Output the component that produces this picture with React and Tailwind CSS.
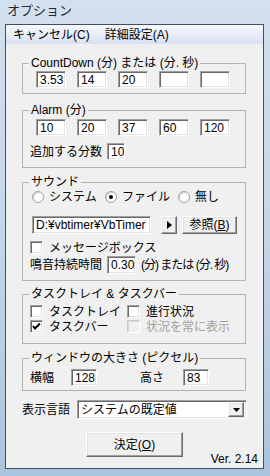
import React from "react";

const sunken =
  "bg-white border border-t-[#a0a0a0] border-l-[#a0a0a0] border-r-white border-b-white shadow-[inset_1px_1px_0_#696969,inset_-1px_-1px_0_#e3e3e3]";
const raised =
  "bg-[#f0f0f0] border border-t-white border-l-white border-r-[#696969] border-b-[#696969] shadow-[inset_-1px_-1px_0_#a0a0a0,inset_1px_1px_0_#e3e3e3]";

function TextBox({ value, className }) {
  return (
    <div className={`${sunken} pl-[3px] pt-[1px] text-[12px] leading-[14px] overflow-hidden whitespace-nowrap ${className}`}>
      {value}
    </div>
  );
}

function Group({ title, className, children }) {
  return (
    <fieldset className={`w-[224px] border border-[#b4b4b4] ${className}`}>
      <legend className="ml-[6px] px-[2px] text-[12px] leading-[12px]">{title}</legend>
      {children}
    </fieldset>
  );
}

function Check({ checked, disabled, label, className }) {
  return (
    <div className={`flex items-center h-[15px] ${className}`}>
      <div
        className={`w-[13px] h-[13px] flex items-center justify-center ${
          disabled
            ? "bg-[#f0f0f0] border border-t-[#c8c8c8] border-l-[#c8c8c8] border-r-white border-b-white shadow-[inset_1px_1px_0_#d8d8d8]"
            : sunken
        }`}
      >
        {checked && (
          <svg width="9" height="9" viewBox="0 0 9 9">
            <path d="M1 4 L3 6.5 L8 1.5" stroke="#000" strokeWidth="2" fill="none" />
          </svg>
        )}
      </div>
      <span className={`ml-[6px] text-[12px] leading-[14px] ${disabled ? "text-[#a0a0a0]" : ""}`}>{label}</span>
    </div>
  );
}

function Radio({ checked, label, className }) {
  return (
    <div className={`flex items-center h-[14px] ${className}`}>
      <div className="w-[12px] h-[12px] rounded-full bg-white border border-[#a0a0a0] shadow-[inset_1px_1px_0_#d0d0d0] flex items-center justify-center">
        {checked && <div className="w-[4px] h-[4px] rounded-full bg-black" />}
      </div>
      <span className="ml-[5px] text-[12px] leading-[14px]">{label}</span>
    </div>
  );
}

export default function App() {
  return (
    <div className="w-[270px] h-[476px] overflow-hidden bg-gradient-to-b from-[#d3e0ed] via-[#c4d6e8] to-[#aac4dd] text-black font-['Liberation_Sans','Noto_Sans_CJK_JP',sans-serif]">
      <div className="h-[24px] pl-[7px] pt-[3px] text-[13px] leading-[16px] text-[#1e2a38]">オプション</div>

      <div className="ml-[5px] w-[259px] h-[445px] border border-[#434f5c] bg-[#f0f0f0] flex flex-col">
        {/* menu bar */}
        <div className="h-[20px] flex items-center bg-gradient-to-b from-[#f7f9fd] to-[#d9e0f1] border-b border-[#eef1f8] text-[12px] leading-[14px]">
          <span className="ml-[7px]">キャンセル(C)</span>
          <span className="ml-[15px]">詳細設定(A)</span>
        </div>

        <div className="pl-[16px] flex flex-col">
          <Group title="CountDown (分) または (分. 秒)" className="mt-[12px] pt-[2px] pb-[5px]">
            <div className="flex gap-[11px] pl-[13px]">
              {["3.53", "14", "20", "", ""].map((v, i) => (
                <TextBox key={i} value={v} className="w-[30px] h-[17px]" />
              ))}
            </div>
          </Group>

          <Group title="Alarm (分)" className="mt-[10px] pt-[3px] pb-[7px]">
            <div className="flex gap-[11px] pl-[13px]">
              {["10", "20", "37", "60", "120"].map((v, i) => (
                <TextBox key={i} value={v} className="w-[30px] h-[17px]" />
              ))}
            </div>
            <div className="flex items-center mt-[7px] pl-[7px]">
              <span className="text-[12px] leading-[14px] w-[77px]">追加する分数</span>
              <TextBox value="10" className="w-[18px] h-[17px]" />
            </div>
          </Group>

          <Group title="サウンド" className="mt-[8px] pt-[2px] pb-[6px]">
            <div className="flex pl-[9px]">
              <Radio label="システム" className="w-[73px]" />
              <Radio checked label="ファイル" className="w-[73px]" />
              <Radio label="無し" />
            </div>
            <div className="flex items-center mt-[12px] pl-[9px]">
              <div className={`${sunken} w-[119px] h-[18px] overflow-hidden`}>
                <div className="w-[113px] overflow-hidden whitespace-nowrap pl-[3px] pt-[1px] text-[12px] leading-[14px]">
                  D:¥vbtimer¥VbTimer¥sound.wav
                </div>
              </div>
              <div className={`${raised} ml-[10px] w-[16px] h-[18px] flex items-center justify-center`}>
                <svg width="5" height="8" viewBox="0 0 5 8">
                  <path d="M0 0 L5 4 L0 8 Z" fill="#000" />
                </svg>
              </div>
              <div className={`${raised} ml-[5px] w-[55px] h-[18px] flex items-center justify-center text-[12px] leading-[14px]`}>
                参照(<span className="underline">B</span>)
              </div>
            </div>
            <Check label="メッセージボックス" className="mt-[6px] pl-[7px]" />
            <div className="flex items-center mt-[1px] pl-[7px]">
              <span className="text-[12px] leading-[14px] w-[77px]">鳴音持続時間</span>
              <TextBox value="0.30" className="w-[29px] h-[18px]" />
              <span className="ml-[5px] text-[12px] leading-[14px] tracking-[-1px]">(分) または (分. 秒)</span>
            </div>
          </Group>

          <Group title="タスクトレイ & タスクバー" className="mt-[7px] pt-[4px] pb-[9px]">
            <div className="grid grid-cols-[97px_1fr] pl-[7px]">
              <Check label="タスクトレイ" />
              <Check label="進行状況" />
              <Check checked label="タスクバー" />
              <Check disabled label="状況を常に表示" />
            </div>
          </Group>

          <Group title="ウィンドウの大きさ (ピクセル)" className="mt-[8px] pt-[5px] pb-[4px]">
            <div className="flex items-center pl-[7px]">
              <span className="text-[12px] leading-[14px] w-[41px]">横幅</span>
              <TextBox value="128" className="w-[26px] h-[17px]" />
              <span className="ml-[43px] text-[12px] leading-[14px] w-[43px]">高さ</span>
              <TextBox value="83" className="w-[26px] h-[17px]" />
            </div>
          </Group>

          <div className="flex items-center mt-[9px]">
            <span className="text-[12px] leading-[14px] w-[55px]">表示言語</span>
            <div className={`${sunken} w-[170px] h-[19px] flex items-center justify-between pl-[3px] pr-[2px]`}>
              <span className="text-[12px] leading-[14px]">システムの既定値</span>
              <div className={`${raised} w-[16px] h-[15px] flex items-center justify-center`}>
                <svg width="7" height="4" viewBox="0 0 7 4">
                  <path d="M0 0 L7 0 L3.5 4 Z" fill="#000" />
                </svg>
              </div>
            </div>
          </div>
        </div>

        <div className="flex items-start mt-[13px]">
          <div className={`${raised} ml-[80px] w-[97px] h-[25px] flex items-center justify-center text-[12px] leading-[14px]`}>
            決定(<span className="underline">O</span>)
          </div>
          <span className="ml-auto mr-[5px] mt-[21px] text-[12px] leading-[12px]">Ver. 2.14</span>
        </div>
      </div>
    </div>
  );
}
